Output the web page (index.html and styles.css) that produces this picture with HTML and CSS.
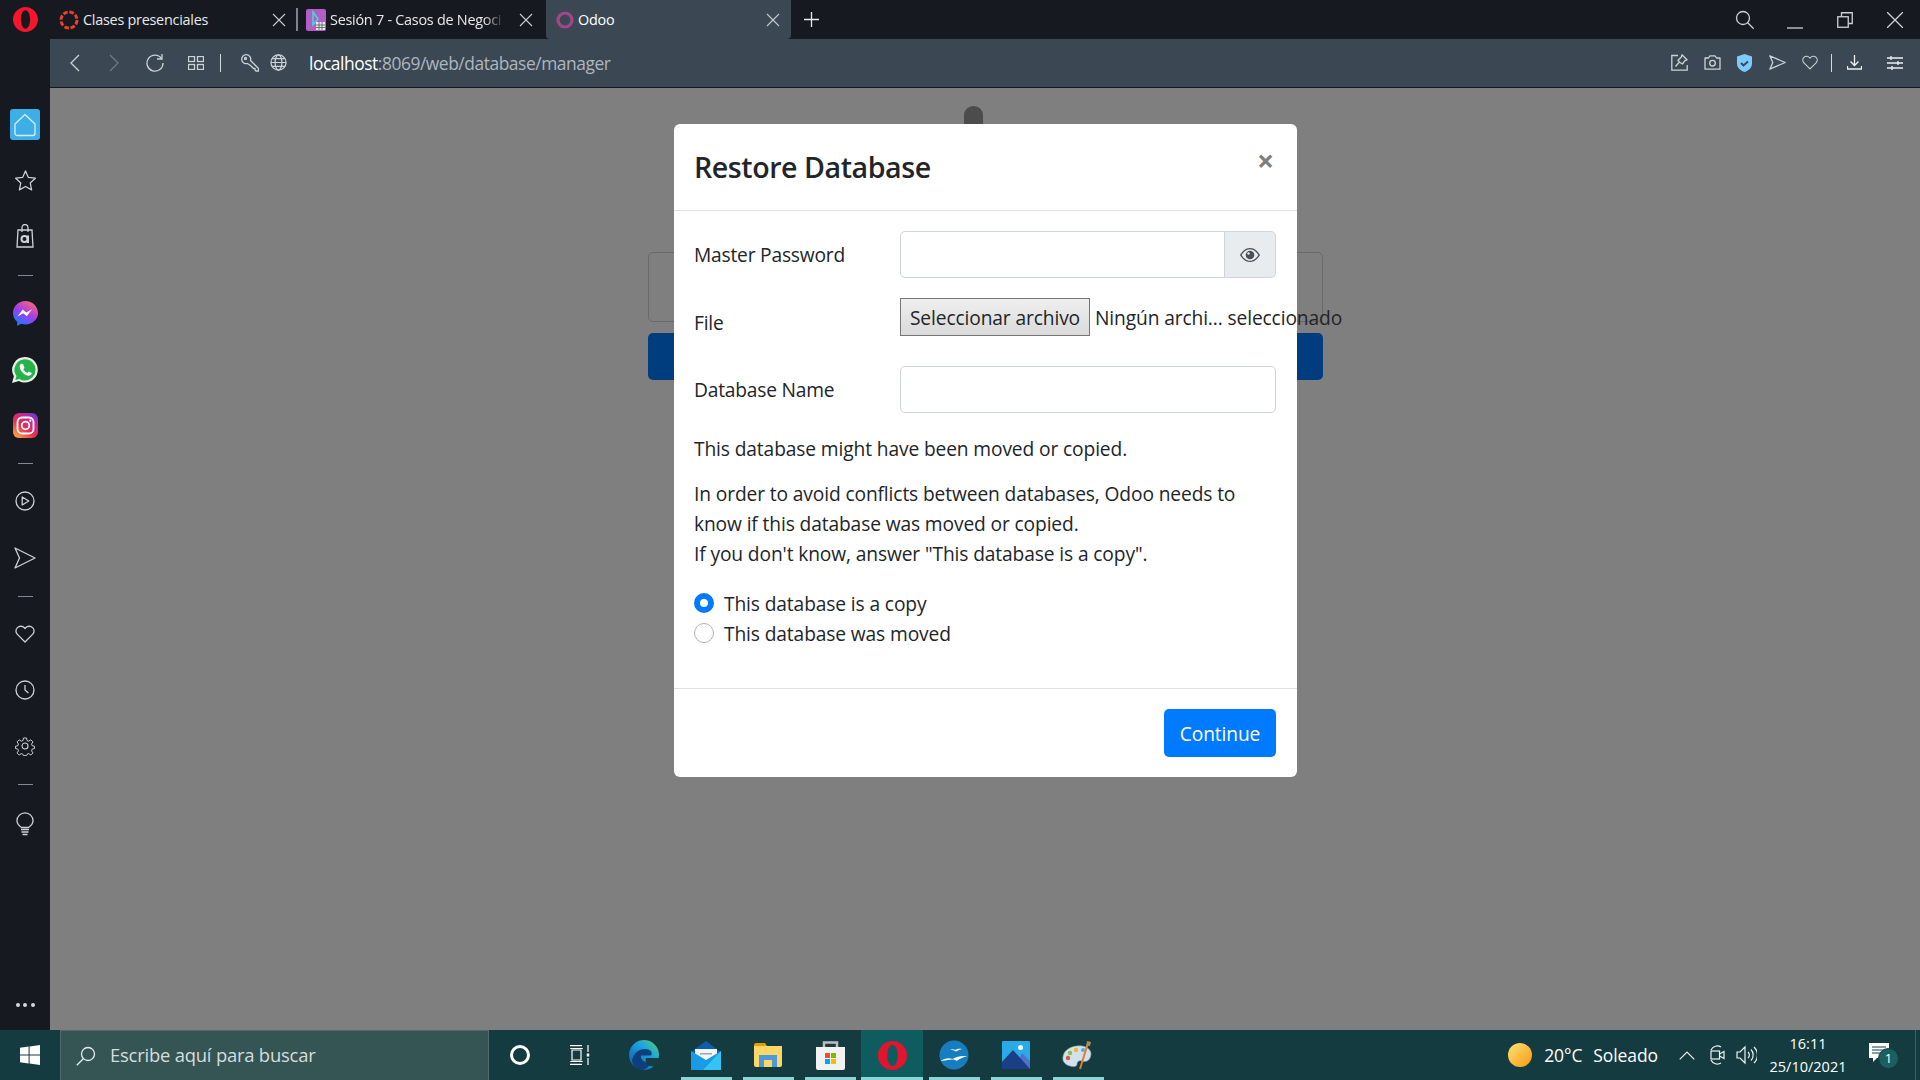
FILE: index.html
```html
<!DOCTYPE html>
<html lang="es">
<head>
<meta charset="utf-8">
<title>Odoo</title>
<link rel="stylesheet" href="styles.css">
</head>
<body>
<div class="app">
  <header class="tabbar">
    <div class="brand">
      <svg width="25" height="25" viewBox="0 0 22 26" preserveAspectRatio="none"><path fill="#f5162b" fill-rule="evenodd" d="M11 0c6 0 11 5.800 11 13s-5 13-11 13S0 20.200 0 13 5 0 11 0zm0 3.500C8.600 3.500 7 7.800 7 13s1.600 9.500 4 9.500 4-4.300 4-9.500-1.600-9.500-4-9.500z"/></svg>
    </div>
    <div class="tab tab-first">
      <svg class="fav" width="20" height="20" viewBox="0 0 20 20"><circle cx="10" cy="10" r="8" fill="none" stroke="#e8412c" stroke-width="3" stroke-dasharray="4.600 1.700"/></svg>
      <span class="tab-title">Clases presenciales</span>
      <svg class="close-x" width="14" height="14" viewBox="0 0 14 14"><path d="M1 1l12 12M13 1L1 13"/></svg>
    </div>
    <i class="tab-sep"></i>
    <div class="tab">
      <svg class="fav" width="20" height="22" viewBox="0 0 20 22"><rect width="20" height="22" rx="2" fill="#b45cc8"/><path d="M7 3l5 7-5 6z" fill="none" stroke="#3fe0d0" stroke-width="1.500"/><rect x="10" y="13" width="9" height="8" fill="#e8e8f0"/><path d="M13 13v8M16 13v8M10 16h9M10 18.500h9" stroke="#555" stroke-width=".8"/></svg>
      <span class="tab-title tab-fade">Sesión 7 - Casos de Negoci</span>
      <svg class="close-x" width="14" height="14" viewBox="0 0 14 14"><path d="M1 1l12 12M13 1L1 13"/></svg>
    </div>
    <div class="tab tab-active">
      <svg class="fav" width="18" height="18" viewBox="0 0 18 18"><circle cx="9" cy="9" r="7" fill="none" stroke="#a24689" stroke-width="3.200"/></svg>
      <span class="tab-title">Odoo</span>
      <svg class="close-x" width="14" height="14" viewBox="0 0 14 14"><path d="M1 1l12 12M13 1L1 13"/></svg>
    </div>
    <svg class="new-tab" width="15" height="15" viewBox="0 0 15 15"><path d="M7.500 0v15M0 7.500h15"/></svg>
    <div class="win-controls">
      <span class="win-btn"><svg class="line" width="20" height="20" viewBox="0 0 20 20"><circle cx="8" cy="8" r="6.500"/><path d="M12.700 12.700l6 6"/></svg></span>
      <span class="win-btn"><svg class="line" width="16" height="4" viewBox="0 0 16 4"><path d="M0 2h16"/></svg></span>
      <span class="win-btn"><svg class="line" width="16" height="16" viewBox="0 0 16 16"><rect x=".75" y="4.750" width="10.500" height="10.500"/><path d="M4.500 4.500V.75h10.750V11.500H11.500"/></svg></span>
      <span class="win-btn"><svg class="line" width="16" height="16" viewBox="0 0 16 16"><path d="M0 0l16 16M16 0L0 16"/></svg></span>
    </div>
  </header>

  <aside class="sidebar">
    <div class="side-group">
      <div class="slot"><span class="home-tile"><svg width="24" height="24" viewBox="0 0 24 24" fill="none" stroke="#d5eefb" stroke-width="1.300"><path d="M2 11l10-9.500L22 11v9.500a2 2 0 0 1-2 2H4a2 2 0 0 1-2-2z" stroke-linejoin="round"/></svg></span></div>
      <div class="slot"><svg class="line" width="23" height="23" viewBox="0 0 24 24"><path d="M12 2l3 6.800 7.300.8-5.400 5 1.500 7.200L12 18.200l-6.400 3.600 1.500-7.200-5.400-5 7.300-.8z" stroke-linejoin="round"/></svg></div>
      <div class="slot"><svg class="line" width="18" height="24" viewBox="0 0 18 24"><path d="M2 6h14l1 17H1z"/><path d="M6 8V3.500a3 3 0 0 1 6 0V8"/><circle cx="8.500" cy="15" r="3" stroke-width="2"/><path d="M12 11.500V19" stroke-width="2"/></svg></div>
    </div>
    <i class="side-sep"></i>
    <div class="side-group">
      <div class="slot"><svg width="25" height="26" viewBox="0 0 25 26"><defs><linearGradient id="msg" x1="0.200" y1="1" x2="0.800" y2="0"><stop offset="0" stop-color="#0a84ff"/><stop offset=".5" stop-color="#a33bf0"/><stop offset="1" stop-color="#ff6a6a"/></linearGradient></defs><path fill="url(#msg)" d="M12.500 0C5.600 0 0 5.200 0 12c0 3.600 1.500 6.700 4.200 8.800V25l4-2.200c1.400.4 2.800.6 4.300.6 6.900 0 12.500-5 12.500-11.400S19.400 0 12.500 0z"/><path fill="#fff" d="M4.500 15.500l5.200-7 3.500 3 5.800-3.300-5.200 7-3.500-3z"/></svg></div>
      <div class="slot"><svg width="26" height="26" viewBox="0 0 26 26"><path fill="#e8efe9" d="M13 0a12.800 12.800 0 0 1 0 25.600c-2.200 0-4.200-.5-6-1.500L0 26l1.900-6.800A12.800 12.800 0 0 1 13 0z"/><path fill="#25b34a" d="M13 2.200a10.600 10.600 0 0 1 0 21.200c-2 0-3.800-.5-5.400-1.500l-4.300 1.200 1.200-4.100A10.600 10.600 0 0 1 13 2.200z"/><path fill="#fff" d="M9.500 6.800c-.6 0-1.800.8-1.800 2.900 0 3.800 5 9 9.200 9 1.800 0 2.900-1.400 2.900-2.600l-3-1.700-1.500 1.500c-1.800-.7-3.300-2.200-4-3.900l1.200-1.300-1.500-3.800z"/></svg></div>
      <div class="slot"><svg width="25" height="25" viewBox="0 0 25 25"><defs><linearGradient id="ig" x1="0.100" y1="1" x2="0.900" y2="0"><stop offset="0" stop-color="#fcb045"/><stop offset=".4" stop-color="#e8314f"/><stop offset=".75" stop-color="#c0289e"/><stop offset="1" stop-color="#5540cf"/></linearGradient></defs><rect width="25" height="25" rx="6" fill="url(#ig)"/><rect x="4.500" y="4.500" width="16" height="16" rx="4.500" fill="none" stroke="#fff" stroke-width="1.800"/><circle cx="12.500" cy="12.500" r="3.800" fill="none" stroke="#fff" stroke-width="1.800"/><circle cx="17.300" cy="7.700" r="1.100" fill="#fff"/></svg></div>
    </div>
    <i class="side-sep side-sep-b"></i>
    <div class="side-group side-wide">
      <div class="slot"><svg class="line" width="20" height="20" viewBox="0 0 20 20"><circle cx="10" cy="10" r="9"/><path d="M7.200 6l6.600 4-6.600 4z" stroke-linejoin="round"/></svg></div>
      <div class="slot"><svg class="line" width="22" height="22" viewBox="0 0 22 22"><path d="M1 1l20 10L1 21l4.500-10z" stroke-linejoin="round"/></svg></div>
    </div>
    <i class="side-sep side-sep-c"></i>
    <div class="side-group side-mid">
      <div class="slot"><svg class="line" width="20" height="18" viewBox="0 0 20 18"><path d="M10 17L2.400 9.400a4.700 4.700 0 0 1 0-6.800 4.900 4.900 0 0 1 7 .2l.6.700.6-.7a4.900 4.900 0 0 1 7-.2 4.700 4.700 0 0 1 0 6.800z" stroke-linejoin="round"/></svg></div>
      <div class="slot"><svg class="line" width="20" height="20" viewBox="0 0 20 20"><circle cx="10" cy="10" r="9"/><path d="M10 5v5l3.400 3"/></svg></div>
      <div class="slot"><svg class="line" width="20" height="20" viewBox="0 0 24 24"><circle cx="12" cy="12" r="3.600"/><path d="M10 1.500h4l.6 3.300 2.300 1 2.800-1.900 2.800 2.800-1.900 2.800 1 2.300 3 .6v3l-3 .7-1 2.300 1.900 2.800-2.800 2.800-2.800-1.900-2.300 1-.6 1.700h-4l-.6-1.700-2.300-1-2.800 1.900-2.800-2.800 1.900-2.800-1-2.300-3-.7v-3l3-.6 1-2.300-1.900-2.800 2.800-2.800 2.800 1.900 2.300-1z" stroke-linejoin="round" transform="translate(1.100 1) scale(.91)"/></svg></div>
    </div>
    <i class="side-sep side-sep-d"></i>
    <div class="slot slot-bulb"><svg class="line" width="18" height="24" viewBox="0 0 18 24"><path d="M5.500 15.500C3 13.800 1 11.800 1 8.800a8 8 0 0 1 16 0c0 3-2 5-4.500 6.700z"/><path d="M5 17.500h8M5.500 20h7M6.500 22.500h5" stroke-width="1.600"/></svg></div>
    <div class="slot slot-dots"><i></i><i></i><i></i></div>
  </aside>

  <nav class="toolbar">
    <span class="tb-btn"><svg class="line" width="11" height="18" viewBox="0 0 11 18"><path d="M10 1L2 9l8 8"/></svg></span>
    <span class="tb-btn tb-dim"><svg class="line" width="11" height="18" viewBox="0 0 11 18"><path d="M1 1l8 8-8 8"/></svg></span>
    <span class="tb-btn"><svg class="line" width="18" height="18" viewBox="0 0 18 18"><path d="M15.500 4.500A8 8 0 1 0 17 9"/><path d="M16 0v5h-5"/></svg></span>
    <span class="tb-btn"><svg class="line" width="16" height="14" viewBox="0 0 16 14"><rect x=".5" y=".5" width="6" height="5"/><rect x="9.500" y=".5" width="6" height="5"/><rect x=".5" y="8.500" width="6" height="5"/><rect x="9.500" y="8.500" width="6" height="5"/></svg></span>
    <i class="tb-sep tb-sep-l"></i>
    <span class="tb-key"><svg class="line" width="18" height="18" viewBox="0 0 18 18"><path d="M6.500 9.500a4.500 4.500 0 1 1 3-3l8 8V17h-2.500l-1-1v-1.500h-1.500L9.500 11.500z" stroke-linejoin="round"/><circle cx="4.500" cy="4.500" r="1"/></svg></span>
    <span class="tb-globe"><svg class="line" width="17" height="17" viewBox="0 0 18 18"><circle cx="9" cy="9" r="8"/><ellipse cx="9" cy="9" rx="3.600" ry="8"/><path d="M1 9h16M2.200 5h13.600M2.200 13h13.600"/></svg></span>
    <span class="url"><b>localhost</b>:8069/web/database/manager</span>
    <div class="tb-right">
      <span class="tb-act"><svg class="line" width="17" height="17" viewBox="0 0 17 17"><path d="M7 1.500H.8v14.700h15.400V11"/><path d="M11 .8l5 5-2 .8-2.600 3.400L9 8.500 6.900 6.200l3.300-3z" stroke-linejoin="round"/><path d="M8 8.500l-3.500 4"/></svg></span>
      <span class="tb-act"><svg class="line" width="17" height="15" viewBox="0 0 17 15"><path d="M1 3h3.500L6 .8h5L12.500 3H16v11.200H1z" stroke-linejoin="round"/><circle cx="8.500" cy="8.200" r="2.800"/></svg></span>
      <span class="tb-act"><svg width="15" height="18" viewBox="0 0 15 18"><path fill="#7bcbff" d="M7.500 0L15 2.500v7c0 4.500-3.500 7-7.500 8.500C3.500 16.500 0 14 0 9.500v-7z"/><path fill="none" stroke="#3a4654" stroke-width="2" d="M4 9l2.500 2.500L11 7.500"/></svg></span>
      <span class="tb-act"><svg class="line" width="17" height="15" viewBox="0 0 17 15"><path d="M.8.800l15.400 6.700-15.400 6.700 3-6.700z" stroke-linejoin="round"/></svg></span>
      <span class="tb-act"><svg class="line" width="16" height="15" viewBox="0 0 20 18"><path d="M10 17L2.400 9.400a4.700 4.700 0 0 1 0-6.800 4.900 4.900 0 0 1 7 .2l.6.700.6-.7a4.900 4.900 0 0 1 7-.2 4.700 4.700 0 0 1 0 6.800z" stroke-linejoin="round"/></svg></span>
      <i class="tb-sep tb-sep-r"></i>
      <span class="tb-act"><svg class="line line-w" width="15" height="15" viewBox="0 0 15 15"><path d="M7.500 0v10M3.500 6.500l4 4 4-4M.5 11v3h14v-3"/></svg></span>
      <span class="tb-act tb-act-last"><svg class="line line-w" width="16" height="14" viewBox="0 0 16 14"><path d="M0 2h16M0 7h16M0 12h16M4 0v4M11 5v4M5 10v4"/></svg></span>
    </div>
  </nav>

  <main class="content">
    <div class="behind">
      <div class="behind-logo"></div>
      <div class="behind-card"></div>
      <div class="behind-btn"></div>
    </div>
    <div class="backdrop">
      <section class="modal">
        <div class="modal-head">
          <h4 class="modal-title">Restore Database</h4>
          <span class="modal-close">×</span>
        </div>
        <div class="modal-body">
          <div class="row">
            <label class="lbl">Master Password</label>
            <div class="input-group">
              <div class="input input-in-group"></div>
              <span class="addon"><svg width="20" height="14" viewBox="0 0 20 14"><path fill="#495057" fill-rule="evenodd" d="M10 0c4.600 0 8 3.400 10 7-2 3.600-5.400 7-10 7S2 10.600 0 7c2-3.600 5.400-7 10-7zM1.600 7c1.700 2.900 4.700 5.800 8.400 5.800s6.700-2.900 8.400-5.800C16.700 4.100 13.700 1.200 10 1.200S3.300 4.100 1.600 7z"/><circle cx="10" cy="7" r="4.300" fill="#495057"/><circle cx="8.500" cy="5.500" r="1.200" fill="#e9ecef"/></svg></span>
            </div>
          </div>
          <div class="row row-file">
            <label class="lbl lbl-file">File</label>
            <div class="file">
              <span class="file-btn">Seleccionar archivo</span>
              <span class="file-name">Ningún archi... seleccionado</span>
            </div>
          </div>
          <div class="row">
            <label class="lbl">Database Name</label>
            <div class="input"></div>
          </div>
          <p class="para">This database might have been moved or copied.</p>
          <p class="para">In order to avoid conflicts between databases, Odoo needs to know if this database was moved or copied.<br>If you don't know, answer "This database is a copy".</p>
          <div class="radio-row"><span class="radio radio-on"></span><span class="radio-text">This database is a copy</span></div>
          <div class="radio-row"><span class="radio"></span><span class="radio-text">This database was moved</span></div>
        </div>
        <div class="modal-foot">
          <span class="btn-primary">Continue</span>
        </div>
      </section>
    </div>
  </main>

  <footer class="taskbar">
    <span class="start"><svg width="20" height="20" viewBox="0 0 20 20"><path fill="#fff" d="M0 2.800l8.600-1.200v7.900H0zM9.600 1.400L20 0v9.500H9.600zM0 10.500h8.600v7.900L0 17.200zM9.600 10.500H20V20L9.600 18.600z"/></svg></span>
    <div class="search">
      <svg class="search-ic" width="20" height="20" viewBox="0 0 20 20"><circle cx="12" cy="8" r="6.500"/><path d="M7.300 12.700L.8 19.300"/></svg>
      <span>Escribe aquí para buscar</span>
    </div>
    <span class="tk-sys tk-cortana"><i></i></span>
    <span class="tk-sys"><svg width="20" height="20" viewBox="0 0 20 20" fill="none" stroke="#fff" stroke-width="1.200"><path d="M0 .6h12M0 19.400h12M2 5h9v10H2zM.2 3.500h12.600M.2 16.500h12.600M18 0v7M18 13v7"/><path d="M18 8.500v3" stroke-width="2.500"/></svg></span>
    <span class="app-slot"><svg width="30" height="30" viewBox="0 0 30 30"><defs><linearGradient id="edge" x1="0" y1="1" x2="1" y2="0"><stop offset="0" stop-color="#0c59a4"/><stop offset=".6" stop-color="#1ba1e2"/><stop offset="1" stop-color="#52d66a"/></linearGradient></defs><circle cx="15" cy="15" r="15" fill="url(#edge)"/><path fill="#0f3f7a" d="M3 21c1-8 7-12 13-12 6 0 8 4 6 6.500H12c-1 4 4 8 10 7.500-2 4-6 7-9 7C8 30 4 26 3 21z"/><path fill="#163d42" d="M17 18h13v5c-2 3-6 4-9 3-4-1-5-5-4-8z"/></svg></span>
    <span class="app-slot app-on"><svg width="30" height="29" viewBox="0 0 30 29"><path fill="#0a5eb0" d="M15 0l15 11v4H0v-4z"/><path fill="#f4f4f4" d="M4 8h22v6L15 20 4 14z"/><path fill="#8fa9c0" d="M9 12h12v1.500H9z"/><path fill="#1a9be6" d="M0 10l15 9 15-9v19H0z"/><path fill="#35c3f3" d="M30 10v19H12z"/></svg></span>
    <span class="app-slot app-on"><svg width="28" height="24" viewBox="0 0 28 24"><path fill="#e0a106" d="M0 2a2 2 0 0 1 2-2h9l2 3h13v6H0z"/><path fill="#fcd768" d="M0 3h28v19a2 2 0 0 1-2 2H2a2 2 0 0 1-2-2z"/><path fill="#4a9bdc" d="M5 12h18v12h-5v-7h-8v7H5z"/></svg></span>
    <span class="app-slot app-on"><svg width="29" height="30" viewBox="0 0 29 30"><path fill="none" stroke="#bdbdbd" stroke-width="2.500" d="M8 9V2.500h13V9"/><path fill="#f2f2f2" d="M0 7h29v21a2 2 0 0 1-2 2H2a2 2 0 0 1-2-2z"/><rect x="9" y="13" width="5" height="5" fill="#f25022"/><rect x="15" y="13" width="5" height="5" fill="#7fba00"/><rect x="9" y="19" width="5" height="5" fill="#00a4ef"/><rect x="15" y="19" width="5" height="5" fill="#ffb900"/></svg></span>
    <span class="app-slot app-on app-active"><svg width="29" height="29" viewBox="0 0 22 26" preserveAspectRatio="none"><path fill="#e3142d" fill-rule="evenodd" d="M11 0c6 0 11 5.800 11 13s-5 13-11 13S0 20.200 0 13 5 0 11 0zm0 3.500C8.600 3.500 7 7.800 7 13s1.600 9.500 4 9.500 4-4.300 4-9.500-1.600-9.500-4-9.500z"/></svg></span>
    <span class="app-slot app-on"><svg width="30" height="30" viewBox="0 0 30 30"><circle cx="15" cy="15" r="14.500" fill="#167ec0"/><path fill="#fff" d="M1.500 21c5-3 8-3.500 12-2 4-2.500 8-3.500 15-3-5 1-8 3-11 5-1-1-2-1.500-4-1.500-3 0-6 1-12 1.500zM11 10c2-1 4-1 5 0 2-1 4-1.500 7-1-2 .5-4 1.500-6 2.500-2-1.500-3-1.500-6-1.500z"/></svg></span>
    <span class="app-slot app-on"><svg width="28" height="28" viewBox="0 0 28 28"><rect width="28" height="28" rx="1" fill="#29abe8"/><circle cx="18.500" cy="6.500" r="2.500" fill="#fff"/><path fill="#4f72c8" d="M13 28l7-16 8 8v8z"/><path fill="#1b3f85" d="M0 21L11 9l17 19H0z"/></svg></span>
    <span class="app-slot app-on"><svg width="32" height="30" viewBox="0 0 32 30"><path fill="#d3e2ea" stroke="#8fa6b4" stroke-width=".6" d="M1 17C2 9 11 5 20 6c7 1 11 6 8 12-2 4-6 4-8 3-2-1-5 0-5 3 0 3-4 3-7 2-4-1-8-4-7-9z"/><circle cx="6" cy="18" r="2.200" fill="#d8574c"/><circle cx="8" cy="13" r="2.200" fill="#8ac04a"/><circle cx="14" cy="10" r="2.200" fill="#f2b632"/><circle cx="21" cy="10" r="2" fill="#5ba7e0"/><path d="M26 3l-8 26" stroke="#d8822a" stroke-width="2"/><path d="M24.500 5.500L25 1l4 1-1 4z" fill="#b98a4a"/></svg></span>
    <div class="tray">
      <span class="sun"></span>
      <span class="weather">20°C</span>
      <span class="weather weather-s">Soleado</span>
      <svg class="tray-ic tray-chev" width="16" height="9" viewBox="0 0 16 9"><path d="M.7 8.300L8 1l7.300 7.300"/></svg>
      <svg class="tray-ic tray-meet" width="15" height="20" viewBox="0 0 15 20"><path d="M1 5a7 7 0 0 1 10-3M1 15a7 7 0 0 0 10 3"/><rect x="1" y="6" width="8.500" height="8"/><path d="M9.500 9L14 6.500v7L9.500 11"/></svg>
      <svg class="tray-ic tray-vol" width="21" height="20" viewBox="0 0 21 20"><path d="M1 7h3l5-5v16l-5-5H1zM12 7a4 4 0 0 1 0 6M15 4.500a8 8 0 0 1 0 11M18 2a11 11 0 0 1 0 16"/></svg>
      <div class="clock"><span>16:11</span><span>25/10/2021</span></div>
      <span class="notif"><svg width="20" height="19" viewBox="0 0 20 19"><path fill="#fff" d="M0 0h20v15H8l-4 4v-4H0z"/><path stroke="#163d42" d="M3 4h14M3 7h14M3 10h10"/></svg><b class="notif-badge">1</b></span>
      <i class="desk-peek"></i>
    </div>
  </footer>
</div>
</body>
</html>
```
FILE: styles.css
```css
* { box-sizing: border-box; }
html, body { margin: 0; height: 100%; overflow: hidden; }
body { font-family: "Open Sans", "Noto Sans", sans-serif; background: #16191f; }
.app {
  display: grid;
  grid-template-columns: 50px 1fr;
  grid-template-rows: 39px 49px 1fr 50px;
  width: 1920px;
  height: 1080px;
}
.line { fill: none; stroke: #cdd2d6; stroke-width: 1.300; flex: none; }
.line-w { stroke: #eef0f2; }

/* tab strip */
.tabbar {
  grid-column: 1 / 3;
  display: flex;
  align-items: center;
  background: #16191f;
  color: #e7e9eb;
}
.brand { width: 50px; height: 39px; display: flex; align-items: center; justify-content: center; flex: none; }
.tab { width: 247px; height: 39px; display: flex; align-items: center; padding: 0 12px 0 8px; flex: none; }
.tab-first { width: 246px; padding: 0 10px 0 9px; }
.tab-title { font-size: 14.400px; letter-spacing: -.25px; margin-left: 4px; flex: 1; white-space: nowrap; margin-right: 14px; }
.tab-fade { -webkit-mask-image: linear-gradient(90deg, #000 88%, transparent); mask-image: linear-gradient(90deg, #000 88%, transparent); }
.tab-active { background: #3b4753; width: 245px; margin-left: 1px; padding-left: 10px; padding-right: 11px; color: #fff; border-radius: 0 0 4px 4px; }
.tab-sep { width: 2px; height: 23px; background: #7d8690; flex: none; }
.fav { flex: none; }
.close-x { fill: none; stroke: #c6cbd0; stroke-width: 1.100; flex: none; }
.new-tab { fill: none; stroke: #e7e9eb; stroke-width: 1.300; margin-left: 13px; flex: none; }
.win-controls { margin-left: auto; display: flex; align-items: center; height: 39px; padding-right: 0; }
.win-btn { width: 50px; display: flex; align-items: center; justify-content: center; }
.win-btn:nth-child(2) svg { margin-top: 16px; }

/* sidebar */
.sidebar {
  grid-column: 1;
  grid-row: 2 / 4;
  background: #16191f;
  display: flex;
  flex-direction: column;
  padding: 58px 0 10px;
}
.side-group { display: flex; flex-direction: column; }
.slot { height: 55.500px; display: flex; align-items: center; justify-content: center; flex: none; }
.side-wide .slot { height: 56.500px; }
.side-mid .slot { height: 56px; }
.home-tile { width: 30px; height: 31px; background: #3eaee6; border-radius: 3px; display: flex; align-items: center; justify-content: center; }
.side-sep { display: block; width: 15px; height: 1px; background: #7e8a96; margin: 11px auto 11px 18px; flex: none; }
.side-sep-b { margin-top: 10px; margin-bottom: 9px; }
.side-sep-c { margin-top: 10px; margin-bottom: 9px; }
.side-sep-d { margin-top: 10px; margin-bottom: 10px; }
.slot-bulb { height: 57px; }
.slot-dots { margin-top: auto; height: 30px; gap: 3.500px; }
.slot-dots i { width: 4px; height: 4px; border-radius: 50%; background: #d4d8dc; display: block; }

/* toolbar */
.toolbar {
  grid-column: 2;
  grid-row: 2;
  background: #3b4753;
  border-bottom: 1px solid #14171c;
  display: flex;
  align-items: center;
  padding-left: 4px;
  padding-bottom: 1px;
}
.tb-btn { width: 40.500px; display: flex; justify-content: center; flex: none; }
.tb-dim .line { stroke: #6f7a85; }
.tb-sep { display: block; width: 1px; height: 18px; background: #d4d8dc; flex: none; }
.tb-sep-l { margin-left: 4px; }
.tb-key { width: 29px; margin-left: 14px; display: flex; justify-content: center; }
.tb-globe { width: 28px; display: flex; justify-content: center; }
.url { margin-left: 17px; font-size: 17.400px; letter-spacing: -.45px; color: #aeb6be; white-space: nowrap; }
.url b { font-weight: 400; color: #fff; }
.tb-right { margin-left: auto; display: flex; align-items: center; padding-right: 9px; }
.tb-act { width: 32.500px; display: flex; justify-content: center; flex: none; }
.tb-act-last { margin-left: 8px; }
.tb-sep-r { margin: 0 6px 0 5px; }

/* page content */
.content { grid-column: 2; grid-row: 3; position: relative; background: #fff; overflow: hidden; }
.behind { width: 675px; margin: 0 auto; display: flex; flex-direction: column; }
.behind-logo { width: 19px; height: 60px; margin: 18px auto 0 316px; background: #999; border-radius: 9px 9px 0 0; }
.behind-card { height: 70px; margin-top: 86px; border: 1px solid #ced4da; border-radius: 5px; }
.behind-btn { height: 47px; margin-top: 11px; background: #007bff; border-radius: 5px; }
.backdrop {
  position: absolute;
  inset: 0;
  background: rgba(0, 0, 0, .5);
  display: flex;
  justify-content: center;
  align-items: flex-start;
  padding: 36px 0 0 1px;
}
.modal { width: 623px; background: #fff; border-radius: 6px; color: #212529; font-size: 19.200px; line-height: 30px; letter-spacing: -.12px; }
.modal-head { height: 87px; border-bottom: 1px solid #dee2e6; padding: 20px 21px 0 20px; display: flex; justify-content: space-between; align-items: flex-start; }
.modal-title { margin: 0; font-size: 28.600px; font-weight: 600; line-height: 45px; letter-spacing: -.45px; }
.modal-close { font-size: 30px; font-weight: 700; line-height: 30px; color: #7f7f7f; margin: 2px 2px 0 0; }
.modal-body { padding: 20px 21px 20px 20px; }
.row { display: grid; grid-template-columns: 206px 1fr; margin-bottom: 20px; }
.row-file { height: 48px; }
.lbl { padding-top: 9px; letter-spacing: -.2px; }
.lbl-file { padding-top: 10px; }
.input { height: 47px; border: 1px solid #ced4da; border-radius: 5px; background: #fff; }
.input-group { display: flex; }
.input-in-group { flex: 1; border-radius: 5px 0 0 5px; }
.addon { width: 52px; height: 47px; margin-left: -1px; background: #e9ecef; border: 1px solid #ced4da; border-radius: 0 5px 5px 0; display: flex; align-items: center; justify-content: center; }
.file { display: flex; align-items: flex-start; white-space: nowrap; }
.file-btn { width: 190px; height: 38px; padding-top: 1px; display: flex; align-items: center; justify-content: center; border: 1px solid #767676; background: linear-gradient(#efefef, #dadada); }
.file-name { margin-left: 5px; line-height: 40px; }
.para { margin: 0 0 15px; }
.row + .para { margin-top: 21px; }
.radio-row { display: flex; align-items: center; height: 30px; }
.radio-row:last-child { margin-bottom: 20px; }
.radio { width: 20px; height: 20px; border-radius: 50%; border: 1px solid #adb5bd; background: #fff; margin-right: 10px; flex: none; }
.radio-on { border: 6px solid #007bff; }
.radio-text { padding-top: 2px; }
.para + .radio-row { margin-top: 19px; }
.modal-foot { height: 89px; border-top: 1px solid #dee2e6; padding: 20px 21px 20px 20px; display: flex; justify-content: flex-end; }
.btn-primary { width: 112px; height: 48px; padding-top: 1px; background: #007bff; color: #fff; border-radius: 5px; display: flex; align-items: center; justify-content: center; }

/* taskbar */
.taskbar {
  grid-column: 1 / 3;
  background: #143b40;
  display: flex;
  align-items: center;
  color: #fff;
}
.start { width: 60px; display: flex; justify-content: center; flex: none; }
.search {
  width: 429px;
  height: 50px;
  background: #355454;
  border: 1px solid #4f6b6b;
  border-bottom: 0;
  display: flex;
  align-items: center;
  padding-left: 15px;
  color: #d5dede;
  font-size: 18.400px;
  letter-spacing: -.2px;
  flex: none;
}
.search span { margin-left: 14px; margin-bottom: 2px; white-space: nowrap; }
.search-ic { fill: none; stroke: #e6ecec; stroke-width: 1.300; flex: none; }
.tk-sys { width: 61px; display: flex; justify-content: center; flex: none; }
.tk-cortana i { display: block; width: 20px; height: 20px; border: 3px solid #fff; border-radius: 50%; }
.tk-sys + .tk-sys svg { margin-left: -2px; }
.tk-sys + .tk-sys { margin-right: 2px; }
.app-slot { width: 62px; height: 50px; display: flex; align-items: center; justify-content: center; flex: none; position: relative; }
.app-on::after { content: ""; position: absolute; left: 6px; right: 5px; bottom: 0; height: 3px; background: #8ad7d7; }
.app-active { background: #0f5c60; }
.app-active::after { left: 0; right: 0; }
.tray { margin-left: auto; display: flex; align-items: center; height: 50px; }
.sun { width: 24px; height: 24px; border-radius: 50%; background: linear-gradient(135deg, #ffe27a, #f59a0c); flex: none; }
.weather { margin-left: 12px; font-size: 17.500px; letter-spacing: -.1px; }
.weather-s { margin-left: 11px; }
.tray-ic { fill: none; stroke: #eef2f2; stroke-width: 1.200; flex: none; }
.tray-chev { margin-left: 21px; }
.tray-meet { margin-left: 15px; }
.tray-vol { margin-left: 11px; }
.clock { width: 90px; margin-left: 6px; display: flex; flex-direction: column; align-items: center; font-size: 14.500px; line-height: 23px; }
.notif { position: relative; width: 20px; height: 24px; margin-left: 16px; display: block; }
.notif-badge { position: absolute; left: 9px; top: 5px; width: 21px; height: 21px; border-radius: 50%; background: #1b5f60; border: 1px solid #143b40; color: #fff; font-weight: 400; font-size: 13px; line-height: 19px; text-align: center; }
.desk-peek { display: block; width: 1px; height: 50px; background: #3c6266; margin-left: 26px; margin-right: 4px; }
```
